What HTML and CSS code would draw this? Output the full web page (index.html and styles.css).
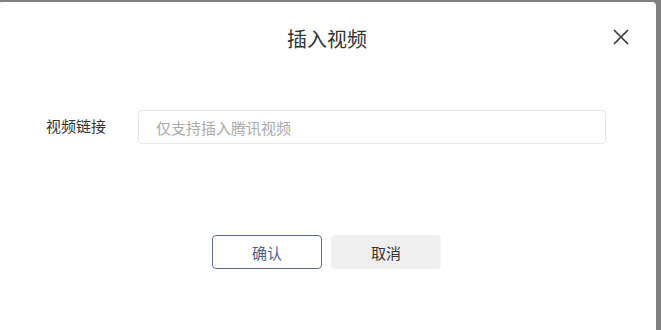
FILE: index.html
```html
<!DOCTYPE html>
<html lang="zh-CN">

<head>
  <meta charset="UTF-8">
  <meta name="viewport" content="width=device-width, initial-scale=1.0">
  <link rel="stylesheet" href="styles.css">
  <title>插入视频</title>
</head>

<body>
  <div class="dialog">
    <header class="dialog-head">
      <h2 class="dialog-title">插入视频</h2>
      <button class="dialog-close" type="button" aria-label="关闭">
        <svg width="16" height="16" viewBox="0 0 16 16">
          <path d="M1 1 L15 15 M15 1 L1 15" stroke="#333" stroke-width="1.6" fill="none" />
        </svg>
      </button>
    </header>

    <form class="dialog-body">
      <div class="field">
        <label for="video-url">视频链接</label>
        <input type="text" id="video-url" name="url" placeholder="仅支持插入腾讯视频">
      </div>

      <div class="actions">
        <button class="btn btn-primary" type="button">确认</button>
        <button class="btn btn-cancel" type="button">取消</button>
      </div>
    </form>
  </div>
</body>

</html>
```

FILE: styles.css
```css
body {
  margin: 0;
  padding-top: 2px;
  height: 328px;
  overflow: hidden;
  background: #808080;
  font-family: "Noto Sans CJK SC", "Noto Sans", sans-serif;
  color: #333;
}

.dialog {
  box-sizing: border-box;
  width: 658px;
  height: 328px;
  margin-left: -2px;
  background: #fff;
  border-radius: 4px 4px 0 0;
}

.dialog-head {
  display: grid;
  grid-template-columns: 1fr auto 1fr;
  padding: 22px 27px 0 25px;
}

.dialog-title {
  grid-column: 2;
  margin: 0 0 0 2px;
  font-size: 20px;
  font-weight: normal;
  line-height: 30px;
}

.dialog-close {
  grid-column: 3;
  justify-self: end;
  align-self: start;
  display: flex;
  margin-top: 5px;
  padding: 0;
  border: 0;
  background: none;
}

.dialog-body {
  padding: 56px 50px 0 48px;
}

.field {
  display: flex;
  align-items: center;
}

.field label {
  width: 92px;
  font-size: 15px;
  line-height: 20px;
  margin-top: -3px;
}

.field input {
  flex: 1;
  box-sizing: border-box;
  height: 34px;
  padding: 0 17px;
  border: 1px solid #e6e6e6;
  border-radius: 4px;
  font: inherit;
  font-size: 15px;
  color: #333;
  outline: none;
}

.field input::placeholder {
  color: #aaa;
}

.actions {
  display: flex;
  justify-content: center;
  gap: 9px;
  margin-top: 91px;
  padding-left: 1px;
}

.btn {
  box-sizing: border-box;
  width: 110px;
  height: 34px;
  border-radius: 4px;
  font: inherit;
  font-size: 15px;
}

.btn-primary {
  border: 1px solid #5b6c98;
  background: #fff;
  color: #4b5d90;
}

.btn-cancel {
  border: 1px solid #f0f0f0;
  background: #f0f0f0;
  color: #333;
}
```
